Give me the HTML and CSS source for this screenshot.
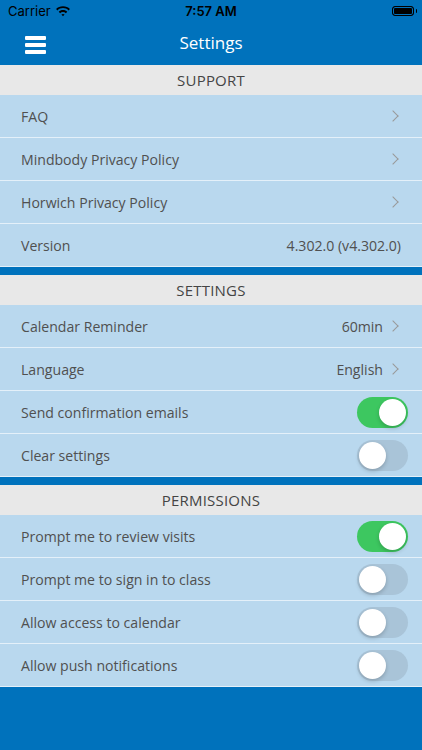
FILE: index.html
```html
<!DOCTYPE html>
<html>
<head>
    <meta charset="UTF-8">
    <title>Settings</title>
    <link rel="stylesheet" href="styles.css">
</head>
<body>
    <div class="top">
        <div class="status">
            <div class="carrier">Carrier
                <svg width="16" height="12" viewBox="0 0 15 11"><path d="M7.5 1C4.9 1 2.6 2 1 3.6l1.3 1.4C3.6 3.6 5.5 2.8 7.5 2.8s3.9.8 5.2 2.2L14 3.6C12.4 2 10.1 1 7.5 1z M7.5 4.6c-1.6 0-3 .6-4 1.6l1.3 1.4c.7-.7 1.7-1.1 2.7-1.1s2 .4 2.7 1.1l1.3-1.4c-1-1-2.4-1.6-4-1.6z M7.5 8.2c-.6 0-1.1.2-1.5.6L7.5 10.4 9 8.8c-.4-.4-.9-.6-1.5-.6z" fill="#000"/></svg>
            </div>
            <div class="time">7:57 AM</div>
            <div class="battery"><span></span></div>
        </div>
        <div class="navbar">
            <div class="burger"><i></i><i></i><i></i></div>
            <div class="title">Settings</div>
        </div>
    </div>

    <div class="section">
        <div class="head">SUPPORT</div>
        <div class="row"><span>FAQ</span><em class="chev"></em></div>
        <div class="row"><span>Mindbody Privacy Policy</span><em class="chev"></em></div>
        <div class="row"><span>Horwich Privacy Policy</span><em class="chev"></em></div>
        <div class="row"><span>Version</span><b>4.302.0 (v4.302.0)</b></div>
    </div>

    <div class="section">
        <div class="head">SETTINGS</div>
        <div class="row"><span>Calendar Reminder</span><b>60min</b><em class="chev"></em></div>
        <div class="row"><span>Language</span><b>English</b><em class="chev"></em></div>
        <div class="row"><span>Send confirmation emails</span><i class="toggle on"></i></div>
        <div class="row"><span>Clear settings</span><i class="toggle"></i></div>
    </div>

    <div class="section">
        <div class="head">PERMISSIONS</div>
        <div class="row"><span>Prompt me to review visits</span><i class="toggle on"></i></div>
        <div class="row"><span>Prompt me to sign in to class</span><i class="toggle"></i></div>
        <div class="row"><span>Allow access to calendar</span><i class="toggle"></i></div>
        <div class="row"><span>Allow push notifications</span><i class="toggle"></i></div>
    </div>
</body>
</html>
```

FILE: styles.css
```css
html{
    background:#0072bc;
}
body{
    margin:0;
    background:#0072bc;
    font-family:"Open Sans", "Noto Sans", sans-serif;
    height:750px;
    overflow:hidden;
}
.status{
    height:22px;
    display:flex;
    align-items:center;
    justify-content:space-between;
    padding:0 8px;
    font-family:"Inter", "Liberation Sans", sans-serif;
    font-size:13px;
    color:#000;
}
.carrier{
    display:flex;
    align-items:center;
    gap:4px;
    width:100px;
}
.time{
    font-weight:600;
}
.battery{
    width:100px;
    display:flex;
    justify-content:flex-end;
}
.battery span{
    width:20px;
    height:8px;
    border:1.5px solid #000;
    border-radius:3px;
    background:#000;
    box-shadow:inset 0 0 0 1px #0072bc;
    position:relative;
}
.battery span:after{
    content:"";
    position:absolute;
    right:-4px;
    top:2px;
    width:1.5px;
    height:4px;
    background:#000;
    border-radius:0 1px 1px 0;
}
.navbar{
    height:43px;
    display:flex;
    align-items:center;
    justify-content:center;
    position:relative;
}
.burger{
    position:absolute;
    left:25px;
    top:14px;
    display:flex;
    flex-direction:column;
    gap:3.5px;
}
.burger i{
    display:block;
    width:21px;
    height:3.5px;
    background:#fff;
    border-radius:1px;
}
.title{
    color:#fff;
    font-size:17px;
    margin-top:-2px;
}
.section{
    margin-bottom:8px;
}
.head{
    height:30px;
    background:#e8e8e8;
    color:#444;
    font-size:15px;
    display:flex;
    align-items:center;
    justify-content:center;
    letter-spacing:0.2px;
}
.row{
    height:42px;
    background:#b9d8ee;
    border-bottom:1px solid #e4f0f9;
    display:flex;
    align-items:center;
    padding:0 14px 0 21px;
    color:#505050;
    font-size:14.1px;
}
.row span{
    flex:1;
}
.row b{
    font-weight:normal;
    margin-right:6px;
}
.row b:last-child{
    margin-right:7px;
}
.chev{
    width:7px;
    height:7px;
    border-right:1.5px solid #999;
    border-top:1.5px solid #999;
    transform:rotate(45deg);
    margin-right:11px;
}
.toggle{
    width:51px;
    height:31px;
    border-radius:16px;
    background:#a9c4d8;
    position:relative;
}
.toggle:after{
    content:"";
    position:absolute;
    top:2px;
    left:2px;
    width:27px;
    height:27px;
    border-radius:50%;
    background:#fff;
    box-shadow:0 2px 4px rgba(0,0,0,0.2);
}
.toggle.on{
    background:#3dc760;
}
.toggle.on:after{
    left:22px;
}
```
